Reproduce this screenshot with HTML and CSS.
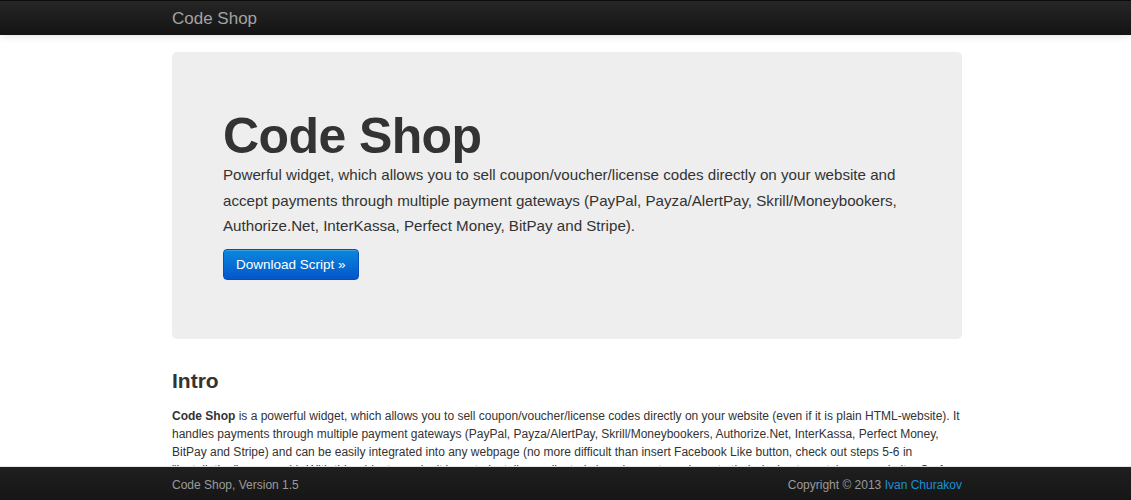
FILE: index.html
```html
<!DOCTYPE html>
<html>
<head>
<meta charset="utf-8">
<title>Code Shop</title>
<link rel="stylesheet" href="styles.css">
</head>
<body>
<header class="navbar">
  <div class="container">
    <a class="brand" href="#">Code Shop</a>
  </div>
</header>
<main class="container">
  <section class="hero">
    <h1>Code Shop</h1>
    <p>Powerful widget, which allows you to sell coupon/voucher/license codes directly on your website and accept payments through multiple payment gateways (PayPal, Payza/AlertPay, Skrill/Moneybookers, Authorize.Net, InterKassa, Perfect Money, BitPay and Stripe).</p>
    <a class="btn-primary" href="#">Download Script »</a>
  </section>
  <h2 class="section-title">Intro</h2>
  <p class="text"><strong>Code Shop</strong> is a powerful widget, which allows you to sell coupon/voucher/license codes directly on your website (even if it is plain HTML-website). It handles payments through multiple payment gateways (PayPal, Payza/AlertPay, Skrill/Moneybookers, Authorize.Net, InterKassa, Perfect Money, BitPay and Stripe) and can be easily integrated into any webpage (no more difficult than insert Facebook Like button, check out steps 5-6 in "Installation" paragraph). With this widget you don't have to install complicated shopping carts and create their design to match your website. <strong>Code Shop</strong> is very easy to use: just create a product, upload the codes and paste the widget code on your page.</p>
</main>
<footer class="footer">
  <div class="container footer-inner">
    <span>Code Shop, Version 1.5</span>
    <span>Copyright © 2013 <a href="#">Ivan Churakov</a></span>
  </div>
</footer>
</body>
</html>
```
FILE: styles.css
```css
html, body {
  margin: 0;
  padding: 0;
}
body {
  font-family: "Liberation Sans", Arial, sans-serif;
  color: #333;
  background: #fff;
  padding-bottom: 60px;
}
.container {
  width: 790px;
  margin-left: calc(50% - 393.5px);
}
.navbar {
  height: 35px;
  background: linear-gradient(#262626, #131313);
  border-top: 1px solid #0c0c0c;
  box-sizing: border-box;
  box-shadow: 0 1px 8px rgba(0,0,0,0.12);
}
.brand {
  display: block;
  color: #a3a3a3;
  font-size: 17px;
  line-height: 35px;
  text-decoration: none;
}
.hero {
  margin-top: 17px;
  background: #eee;
  border-radius: 5px;
  padding: 59px 51px 59px 51px;
}
.hero h1 {
  margin: 0;
  font-size: 50px;
  line-height: 50px;
  letter-spacing: -0.6px;
  font-weight: bold;
  color: #333;
}
.hero p {
  margin: 1px 0 10px;
  font-size: 15.15px;
  line-height: 25.5px;
  color: #333;
}
.btn-primary {
  display: inline-block;
  box-sizing: border-box;
  height: 31px;
  padding: 0 12px;
  line-height: 30px;
  font-size: 13.5px;
  color: #fff;
  text-decoration: none;
  border-radius: 4px;
  background: linear-gradient(#0a88dc, #0456cc);
  border: 1px solid #0450b8;
  box-shadow: inset 0 1px 0 rgba(255,255,255,0.2);
}
.section-title {
  margin: 27px 0 11px;
  font-size: 21px;
  line-height: 30px;
  font-weight: bold;
  color: #333;
}
.text {
  margin: 0;
  font-size: 12px;
  line-height: 18px;
}
.footer {
  position: fixed;
  left: 0;
  right: 0;
  bottom: 0;
  height: 33px;
  background: linear-gradient(#1f1f1f, #161616);
  border-top: 1px solid #e6e6e6;
  color: #9a9a9a;
  font-size: 12px;
}
.footer-inner {
  display: flex;
  justify-content: space-between;
  align-items: center;
  box-sizing: border-box;
  height: 100%;
  padding-top: 3px;
}
.footer a {
  color: #1a8fd6;
  text-decoration: none;
}
```
